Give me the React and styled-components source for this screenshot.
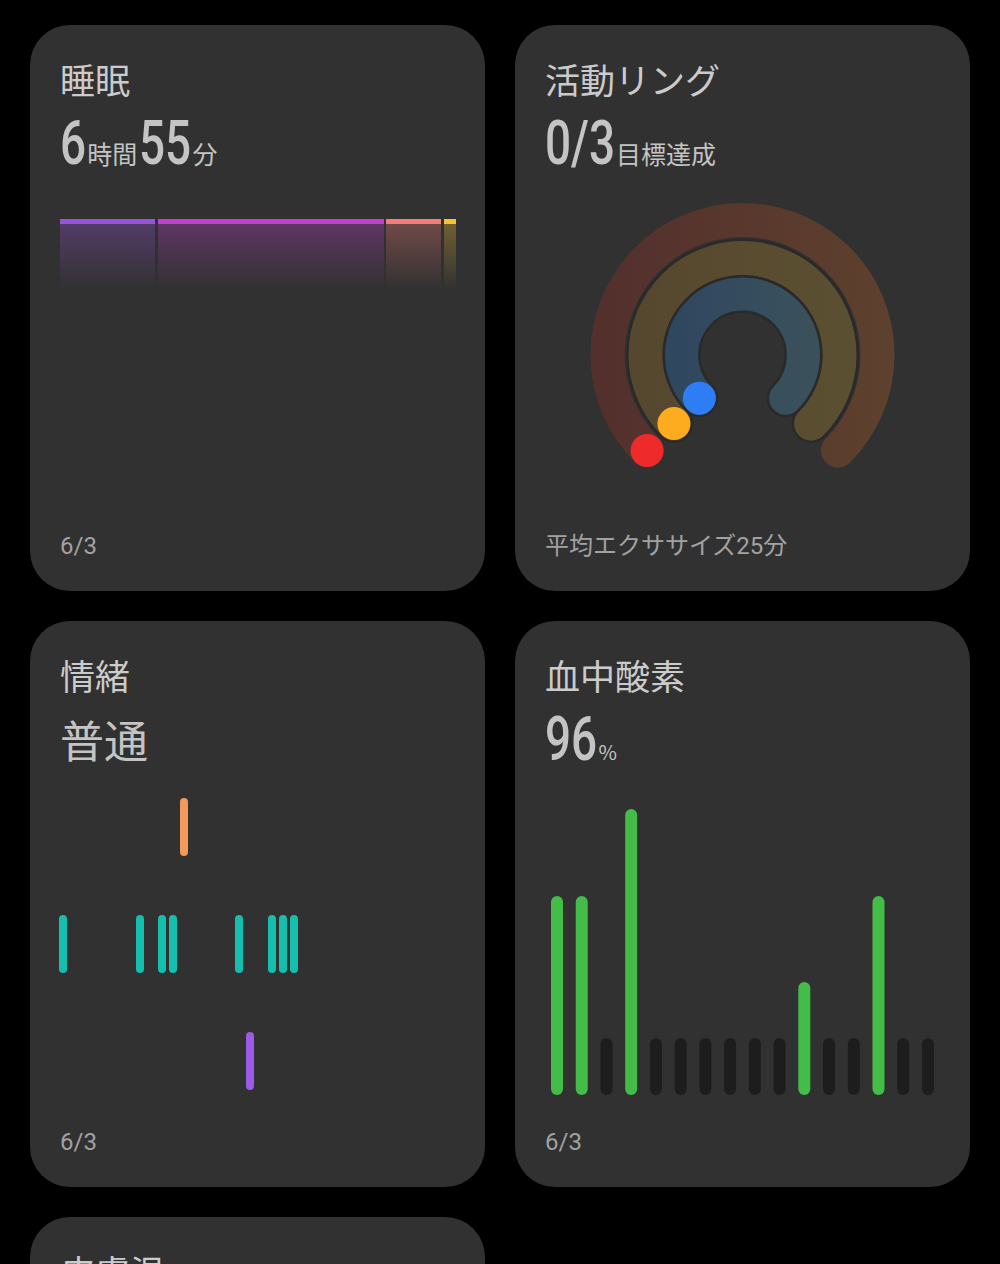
import React from 'react';
import styled, { createGlobalStyle } from 'styled-components';

const GlobalStyle = createGlobalStyle`
  body {
    margin: 0;
    background: #000;
    font-family: "Noto Sans CJK JP", "Noto Sans", sans-serif;
  }
`;

const Grid = styled.div`
  display: grid;
  grid-template-columns: repeat(2, 455px);
  gap: 30px;
  padding: 25px 30px 0;
`;

const Card = styled.div`
  height: 566px;
  box-sizing: border-box;
  background: #313131;
  border-radius: 40px;
  padding: 34px 30px 30px;
  display: flex;
  flex-direction: column;
`;

const Title = styled.div`
  font-size: 35px;
  line-height: 40px;
  color: #cbcbcb;
`;

const Value = styled.div`
  margin-top: 14px;
  height: 60px;
  line-height: 60px;
  display: flex;
  align-items: baseline;
  color: #c4c4c4;
`;

// condensed figures: Roboto squeezed horizontally
const SCALE = 0.74;
const Num = styled.span`
  display: inline-block;
  font-family: "Roboto", sans-serif;
  font-size: 62px;
  font-weight: 500;
  transform: scaleX(${SCALE});
  transform-origin: left bottom;
  margin-right: ${p => -(1 - SCALE) * p.w}px;
`;

const Unit = styled.span`
  font-size: ${p => p.size || 25}px;
  margin: 0 2px 0 1px;
`;

const Word = styled.span`
  font-size: 44px;
`;

const Chart = styled.div`
  margin-top: ${p => p.top}px;
  display: flex;
  justify-content: ${p => (p.center ? 'center' : 'flex-start')};
  svg {
    overflow: visible;
    display: block;
  }
`;

const Footer = styled.div`
  margin-top: auto;
  font-family: "Roboto", "Noto Sans CJK JP", sans-serif;
  font-size: 24px;
  line-height: 30px;
  color: #a2a2a2;
`;

const numWidth = s => [...s].reduce((t, c) => t + (c === '/' ? 25.5 : 34.8), 0);

const Figure = ({ children }) => <Num w={numWidth(children)}>{children}</Num>;

const sleepStages = [
  { x: 0, w: 95, color: '#9b52da' },
  { x: 98, w: 226, color: '#c23fd0' },
  { x: 326, w: 55, color: '#f27d79' },
  { x: 384, w: 12, color: '#f4c431' },
];

const SleepChart = () => (
  <svg width="396" height="75">
    <defs>
      {sleepStages.map((s, i) => (
        <linearGradient key={i} id={`sg${i}`} x1="0" y1="0" x2="0" y2="1">
          <stop offset="0" stopColor={s.color} stopOpacity="0.32" />
          <stop offset="1" stopColor={s.color} stopOpacity="0" />
        </linearGradient>
      ))}
    </defs>
    {sleepStages.map((s, i) => (
      <g key={i}>
        <rect x={s.x} y="5" width={s.w} height="66" fill={`url(#sg${i})`} />
        <rect x={s.x} y="0" width={s.w} height="5" fill={s.color} />
      </g>
    ))}
  </svg>
);

const CX = 197.5;
const CY = 160;
const arc = r => {
  const d = r * Math.SQRT1_2;
  return `M ${CX - d} ${CY + d} A ${r} ${r} 0 1 1 ${CX + d} ${CY + d}`;
};

const rings = [
  { r: 135, w: 34, from: '#54302d', to: '#5d402d', dot: '#ee2a2a', edge: false },
  { r: 97, w: 34, from: '#56482e', to: '#5b4f31', dot: '#fdab1f', edge: true },
  { r: 61, w: 33, from: '#304760', to: '#3a515c', dot: '#2d7ef5', edge: true },
];

const RingChart = () => (
  <svg width="395" height="290">
    <defs>
      {rings.map((g, i) => (
        <linearGradient key={i} id={`rg${i}`} x1="0" y1="0" x2="1" y2="0">
          <stop offset="0" stopColor={g.from} />
          <stop offset="1" stopColor={g.to} />
        </linearGradient>
      ))}
    </defs>
    {rings.map((g, i) => (
      <g key={i}>
        {g.edge && (
          <path d={arc(g.r)} fill="none" stroke="#2a2a2a" strokeWidth={g.w + 5} strokeLinecap="round" />
        )}
        <path d={arc(g.r)} fill="none" stroke={`url(#rg${i})`} strokeWidth={g.w} strokeLinecap="round" />
      </g>
    ))}
    {rings.map((g, i) => (
      <circle key={`d${i}`} cx={CX - g.r * Math.SQRT1_2} cy={CY + g.r * Math.SQRT1_2} r="16.5" fill={g.dot} />
    ))}
  </svg>
);

const moodMarks = [
  { x: 124, y: 17, color: '#f39a5a' },
  ...[3, 80, 102, 113, 179, 212, 223, 234].map(x => ({ x, y: 134, color: '#14bfae' })),
  { x: 190, y: 251, color: '#9b5be8' },
];

const MoodChart = () => (
  <svg width="395" height="320">
    {moodMarks.map((m, i) => (
      <rect key={i} x={m.x - 4} y={m.y} width="8" height="58" rx="4" fill={m.color} />
    ))}
  </svg>
);

const oxygen = [115, 115, 0, 28, 0, 0, 0, 0, 0, 0, 201, 0, 0, 115, 0, 0];

const OxygenChart = () => (
  <svg width="395" height="320">
    {oxygen.map((top, i) => {
      const x = 12 + i * 24.73 - 6;
      const y = top || 257;
      return (
        <rect key={i} x={x} y={y} width="12" height={314 - y} rx="6" fill={top ? '#43bc48' : '#1d1d1d'} />
      );
    })}
  </svg>
);

export default function App() {
  return (
    <>
      <GlobalStyle />
      <Grid>
        <Card>
          <Title>睡眠</Title>
          <Value>
            <Figure>6</Figure>
            <Unit>時間</Unit>
            <Figure>55</Figure>
            <Unit>分</Unit>
          </Value>
          <Chart top={46}>
            <SleepChart />
          </Chart>
          <Footer>6/3</Footer>
        </Card>
        <Card>
          <Title>活動リング</Title>
          <Value>
            <Figure>0/3</Figure>
            <Unit>目標達成</Unit>
          </Value>
          <Chart top={22} center>
            <RingChart />
          </Chart>
          <Footer>平均エクササイズ25分</Footer>
        </Card>
        <Card>
          <Title>情緒</Title>
          <Value>
            <Word>普通</Word>
          </Value>
          <Chart top={12}>
            <MoodChart />
          </Chart>
          <Footer>6/3</Footer>
        </Card>
        <Card>
          <Title>血中酸素</Title>
          <Value>
            <Figure>96</Figure>
            <Unit size={20}>%</Unit>
          </Value>
          <Chart top={12}>
            <OxygenChart />
          </Chart>
          <Footer>6/3</Footer>
        </Card>
        <Card>
          <Title>皮膚温</Title>
        </Card>
      </Grid>
    </>
  );
}
